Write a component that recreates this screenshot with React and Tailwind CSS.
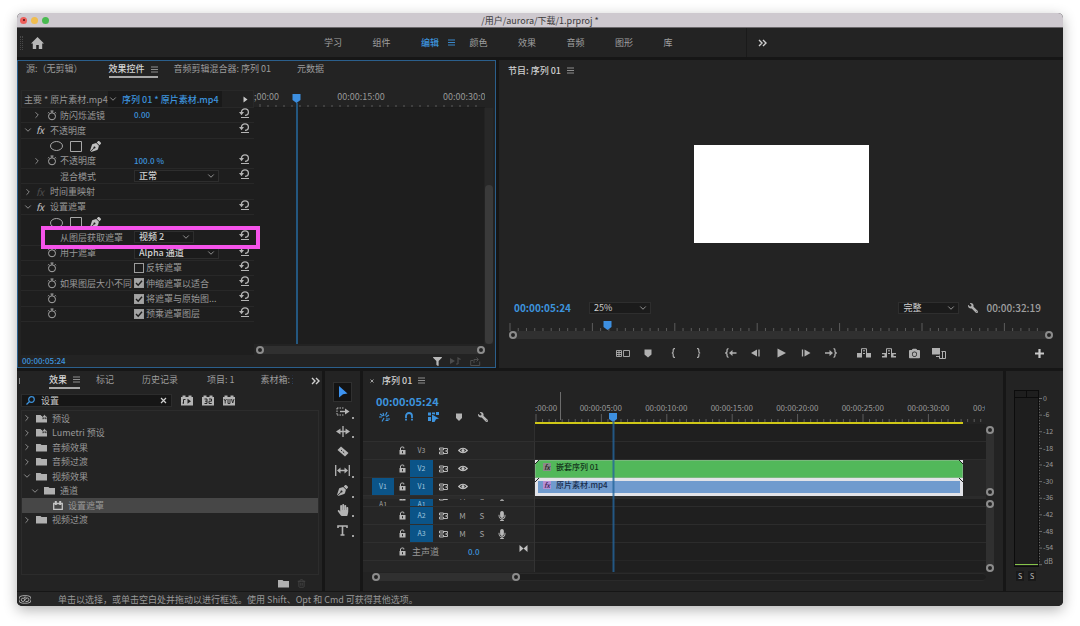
import { FaCamera, FaFilter, FaHandPaper, FaMicrophone, FaPenNib, FaWrench } from 'react-icons/fa';
import { ChevronDown, ChevronRight, Trash2 } from 'lucide-react';

const Icon = ({ w = 12, h = 12, className = '', children }) => (
  <svg
    width={w}
    height={h}
    viewBox={`0 0 ${w} ${h}`}
    fill="none"
    stroke="currentColor"
    className={`shrink-0 ${className}`}
    aria-hidden="true"
  >
    {children}
  </svg>
);

const Burger = ({ className = 'text-[#9a9a9a]' }) => (
  <Icon w={7} h={7} className={className}>
    <path d="M0 1h7M0 3.5h7M0 6h7" strokeWidth="0.9" />
  </Icon>
);

const DoubleChevron = () => (
  <Icon w={9} h={8} className="text-[#d0d0d0]">
    <path d="M1 1l3 3-3 3M5 1l3 3-3 3" strokeWidth="1.4" />
  </Icon>
);

const Reset = () => (
  <Icon w={11} h={11} className="text-[#b4b4b4]">
    <path d="M2.500 4.500V4C2.500 2 4 .9 6 .9S9.400 2.200 9.400 4.200 8 7.300 6 7.300" strokeWidth="1.3" />
    <path d="M0 4h5L2.500 7.200z" fill="currentColor" stroke="none" />
    <path d="M2 9.500h8" strokeWidth="1" />
  </Icon>
);

const Stopwatch = () => (
  <Icon w={10} h={11} className="text-[#a8a8a8]">
    <circle cx="5" cy="6.300" r="3.500" strokeWidth="1" />
    <path d="M3.500 1h3M5 1v1.800M8 2.200l1 1M2 2.200l-1 1" strokeWidth="1" />
  </Icon>
);

const Marker = ({ className }) => (
  <Icon w={8} h={9} className={className}>
    <path d="M0.500 0.500h7v5L4 8.500.5 5.500z" fill="currentColor" stroke="none" />
  </Icon>
);

const Playhead = () => (
  <Icon w={9} h={9} className="text-[#3d8fe0]">
    <path d="M0.500 0h8v6L4.500 9 .5 6z" fill="currentColor" stroke="none" />
  </Icon>
);

const Folder = ({ star, className = 'text-[#b0b0b0]' }) => (
  <Icon w={11} h={9} className={className}>
    <path d="M0 1h4.500l1 1H11v6.500H0z" fill="currentColor" stroke="none" />
    {star && (
      <path
        d="M8.500 0l.9 1.700 1.600.2-1.200 1.300.4 1.800-1.700-.9-1.700.9.4-1.800L6 1.900l1.600-.2z"
        fill="currentColor"
        stroke="#232323"
        strokeWidth="0.7"
      />
    )}
  </Icon>
);

const EffectBlock = () => (
  <Icon w={10} h={9} className="text-[#c4c4c4]">
    <path d="M0.700 2.500h8.600v5.800H.7z" strokeWidth="1.300" />
    <path d="M1.800 0h2v4h-2zM6.200 0h2v4h-2z" fill="currentColor" stroke="none" />
  </Icon>
);

const Badge = ({ children }) => (
  <Icon w={12} h={11} className="text-[#b4b4b4]">
    <path d="M0 2h1.500V.5h3V2h3V.5h3V2H12v8.500H0z" fill="currentColor" stroke="none" />
    <g className="text-[#232323]">{children}</g>
  </Icon>
);

const Lock = () => (
  <Icon w={7} h={9} className="text-[#b8b8b8]">
    <path d="M0.500 4h6v4.500h-6z" fill="currentColor" stroke="none" />
    <path d="M1.500 4V1.800Q3 .2 4.800 1.300V2.500" strokeWidth="1" />
    <path d="M3.500 5.200v2" stroke="#262626" strokeWidth="1" />
  </Icon>
);

const SyncLock = () => (
  <Icon w={9} h={8} className="text-[#b8b8b8]">
    <path d="M0.500 1h4v2h-4zM.5 5h4v2h-4zM4.500 1.500h4v1.500M4.500 6.500h4V5" strokeWidth="1" />
    <path d="M6.500 3.200h2.500v1.600H6.500z" fill="currentColor" stroke="none" />
  </Icon>
);

const Eye = () => (
  <Icon w={10} h={7} className="text-[#c4c4c4]">
    <path d="M0.700 3.500Q5-1 9.300 3.500Q5 8 .7 3.500z" strokeWidth="1.100" />
    <circle cx="5" cy="3.500" r="1.500" fill="currentColor" stroke="none" />
  </Icon>
);

const Knob = () => <span className="size-2 shrink-0 rounded-full border-2 border-[#8c8c8c] bg-[#232323]" />;

// evenly spaced marks; every `major`-th one is taller
const Ticks = ({ step, count, major, height = 8, start = 1, className = '' }) => (
  <svg width="100%" height={height} className={className} aria-hidden="true">
    {Array.from({ length: count }, (_, i) => (
      <line
        key={i}
        x1={start + i * step}
        x2={start + i * step}
        y1={i % major === 0 ? 0 : height - 3}
        y2={height}
        stroke="#5c5c5c"
        strokeWidth="1"
      />
    ))}
  </svg>
);

const Dropdown = ({ label, options, className = '' }) => (
  <div className={`relative flex h-3 items-center border border-[#2e2e2e] bg-[#1b1b1b] ${className}`}>
    <select
      aria-label={label}
      className="h-3.5 w-full appearance-none bg-transparent pl-1 text-[9px] leading-[14px] text-[#d0d0d0] outline-none"
    >
      {options.map((option) => (
        <option key={option}>{option}</option>
      ))}
    </select>
    <ChevronDown size={10} className="pointer-events-none absolute right-0.5 text-[#a8a8a8]" />
  </div>
);

const Tab = ({ active, children, className = '' }) => (
  <button
    className={`flex h-4 items-center gap-1.5 whitespace-nowrap border-b-2 ${
      active ? 'border-[#a8a8a8] font-medium text-[#d4d4d4]' : 'border-transparent text-[#9c9c9c]'
    } ${className}`}
  >
    {children}
    {active && <Burger />}
  </button>
);

const WORKSPACES = ['学习', '组件', '编辑', '颜色', '效果', '音频', '图形', '库'];

const TitleBar = () => (
  <header className="relative flex h-[15px] shrink-0 items-center justify-center border-b border-[#6b686b] bg-[#cec9cf] text-[#3c3a3c]">
    <div className="absolute left-[3px] flex gap-1">
      <button aria-label="关闭" className="flex size-[7px] items-center justify-center rounded-full bg-[#ee5f5b]">
        <span className="size-0.5 rounded-full bg-[#4c0f10]" />
      </button>
      <button aria-label="最小化" className="size-[7px] rounded-full bg-[#f0bd4e]" />
      <button aria-label="缩放" className="size-[7px] rounded-full bg-[#49bb50]" />
    </div>
    <h1 className="text-[9px] leading-none">/用户/aurora/下载/1.prproj *</h1>
  </header>
);

const WorkspaceBar = () => (
  <nav className="flex h-[29px] shrink-0 items-center bg-[#232323]">
    <div className="ml-[3px] h-3.5 w-[3px] border-x border-dotted border-[#484848]" />
    <button aria-label="主页" className="ml-2 text-[#b8b8b8]">
      <Icon w={13} h={12}>
        <path d="M6.500 0L13 6.500h-1.800V12H7.800V8H5.200v4H1.800V6.500H0z" fill="currentColor" stroke="none" />
      </Icon>
    </button>
    <div className="ml-[280px] grid w-[388px] grid-cols-8">
      {WORKSPACES.map((name) => (
        <button
          key={name}
          className={`flex items-center gap-[9px] leading-none ${
            name === '编辑' ? 'font-medium text-[#3d93dd]' : 'text-[#a0a0a0]'
          }`}
        >
          {name}
          {name === '编辑' && <Burger className="text-[#3d93dd]" />}
        </button>
      ))}
    </div>
    <div className="ml-[34px] flex h-full items-center border-l border-[#1a1a1a] pl-[11px]">
      <button aria-label="更多工作区">
        <DoubleChevron />
      </button>
    </div>
  </nav>
);

const PROPERTIES = [
  { kind: 'param', open: false, timed: true, label: '防闪烁滤镜', value: '0.00' },
  { kind: 'group', open: true, fx: true, label: '不透明度' },
  { kind: 'shapes' },
  { kind: 'param', open: false, timed: true, label: '不透明度', value: '100.0 %' },
  { kind: 'param', label: '混合模式', options: ['正常', '溶解', '变暗'] },
  { kind: 'group', open: false, dim: true, label: '时间重映射' },
  { kind: 'group', open: true, fx: true, label: '设置遮罩' },
  { kind: 'shapes' },
  { kind: 'param', label: '从图层获取遮罩', options: ['视频 2', '视频 1'], narrow: true, highlight: true },
  { kind: 'param', timed: true, label: '用于遮罩', options: ['Alpha 通道', '明亮度'] },
  { kind: 'param', timed: true, check: '反转遮罩', checked: false },
  { kind: 'param', timed: true, label: '如果图层大小不同', check: '伸缩遮罩以适合', checked: true },
  { kind: 'param', timed: true, check: '将遮罩与原始图...', checked: true },
  { kind: 'param', timed: true, check: '预乘遮罩图层', checked: true },
];

const Twirl = ({ open }) => (
  <span className="flex w-3.5 shrink-0 justify-center text-[#a0a0a0]">
    {open === true && <ChevronDown size={10} />}
    {open === false && <ChevronRight size={10} />}
  </span>
);

const ShapesRow = () => (
  <div className="flex items-center gap-[7px] pl-[29px] text-[#a8a8a8]">
    <button aria-label="创建椭圆形蒙版">
      <Icon w={13} h={10}>
        <ellipse cx="6.500" cy="5" rx="6" ry="4.500" />
      </Icon>
    </button>
    <button aria-label="创建 4 点多边形蒙版">
      <Icon w={12} h={11}>
        <path d="M0.500.5h11v10H.5z" />
      </Icon>
    </button>
    <button aria-label="自由绘制贝塞尔曲线" className="ml-px text-[#c0c0c0]">
      <FaPenNib size={11} />
    </button>
  </div>
);

const PropertyRow = ({ row }) => {
  if (row.kind === 'shapes') return <ShapesRow />;

  const reset = !row.dim && (
    <button aria-label="重置" className="absolute right-1 top-0">
      <Reset />
    </button>
  );

  if (row.kind === 'group') {
    return (
      <div className="relative flex items-center border-b border-[#282828]">
        <Twirl open={row.open} />
        <span className={`w-2.5 text-center text-[10px] italic leading-none ${row.dim ? 'text-[#4c4c4c]' : 'text-[#c0c0c0]'}`}>
          fx
        </span>
        <span className="ml-[5px] leading-none">{row.label}</span>
        {reset}
      </div>
    );
  }

  return (
    <div className="relative flex items-center border-b border-[#282828] pl-[9px]">
      <Twirl open={row.open} />
      <span className="flex w-4 shrink-0 justify-center">{row.timed && <Stopwatch />}</span>
      <span className="w-[74px] shrink-0 whitespace-nowrap leading-none">{row.label}</span>
      {row.value && <span className="text-[8px] font-medium leading-none text-[#3d93dd]">{row.value}</span>}
      {row.options && (
        <Dropdown label={row.label} options={row.options} className={row.narrow ? 'w-[60px] font-medium' : 'w-[85px] font-medium'} />
      )}
      {row.check && (
        <label className="relative flex items-center gap-0.5 leading-none">
          <input
            type="checkbox"
            defaultChecked={row.checked}
            className="peer size-2.5 appearance-none border border-[#9c9c9c] checked:bg-[#a4a4a4]"
          />
          <Icon w={10} h={10} className="absolute left-0 hidden text-[#1e1e1e] peer-checked:block">
            <path d="M2 5l2.200 2.300L8 2.800" strokeWidth="1.400" />
          </Icon>
          {row.check}
        </label>
      )}
      {reset}
      {row.highlight && (
        <div className="pointer-events-none absolute -bottom-1 -right-[6px] -top-1 left-5 z-10 border-4 border-[#f553ea]" />
      )}
    </div>
  );
};

const EffectControls = () => (
  <section className="flex w-[479px] shrink-0 flex-col border border-[#2b5f8c] bg-[#232323]">
    <div className="flex h-[29px] items-start pl-2 pt-px">
      <Tab>源:（无剪辑）</Tab>
      <Tab active className="ml-[26px]">效果控件</Tab>
      <Tab className="ml-4">音频剪辑混合器: 序列 01</Tab>
      <Tab className="ml-[26px]">元数据</Tab>
    </div>

    <div className="ml-[3px] flex min-h-0 flex-1">
      <div className="flex w-[233px] shrink-0 flex-col bg-[#1e1e1e] text-[#989898]">
        <div className="flex h-[18px] shrink-0 items-center border border-[#282828] bg-[#212121] leading-none">
          <span className="w-[86px] shrink-0 whitespace-nowrap pl-0.5">主要 * 原片素材.mp4</span>
          <button className="flex h-full w-[114px] items-center gap-1 whitespace-nowrap bg-[#191919] font-medium text-[#3d93dd]">
            <ChevronDown size={10} className="shrink-0 text-[#a0a0a0]" />
            序列 01 * 原片素材.mp4
          </button>
          <Icon w={5} h={7} className="ml-auto mr-[5px] text-[#c8c8c8]">
            <path d="M0.500 0.500L4.500 3.500.5 6.500z" fill="currentColor" stroke="none" />
          </Icon>
        </div>
        <div className="grid h-[214px] shrink-0 grid-rows-[repeat(14,minmax(0,1fr))]">
          {PROPERTIES.map((row, index) => (
            <PropertyRow key={index} row={row} />
          ))}
        </div>
      </div>

      <div className="relative flex min-w-0 flex-1 flex-col">
        <div className="mr-2.5 h-[18px] shrink-0 overflow-hidden border-b border-[#1c1c1c] text-[9px] text-[#989898]">
          <div className="flex justify-between leading-[14px]">
            <span>;00:00</span>
            <span>00:00:15:00</span>
            <span className="w-[42px] overflow-hidden whitespace-nowrap">00:00:30:00</span>
          </div>
          <Ticks step={8} count={28} major={99} height={4} start={6} />
        </div>
        <div className="flex min-h-0 flex-1">
          <div className="mr-px flex-1 bg-[#1e1e1e]" />
          <div className="w-2 bg-[#282828] pt-[77px]">
            <div className="h-full rounded-full bg-[#3a3a3a]" />
          </div>
          <div className="w-0.5" />
        </div>
        <div className="mr-2.5 flex h-[11px] shrink-0 items-center pl-0.5">
          <div className="flex h-2 flex-1 items-center justify-between rounded-full bg-[#303030]">
            <Knob />
            <Knob />
          </div>
        </div>
        <div className="absolute bottom-[11px] left-[38px] top-1 flex flex-col items-center">
          <Playhead />
          <div className="w-0.5 flex-1 bg-[#24577f]" />
        </div>
      </div>
    </div>

    <div className="flex h-3 shrink-0 items-center gap-2 pl-1 pr-3.5 text-[#4c4c4c]">
      <span className="mr-auto text-[8px] font-medium leading-none text-[#3d93dd]">00:00:05:24</span>
      <button aria-label="过滤属性" className="text-[#b8b8b8]">
        <FaFilter size={9} />
      </button>
      <button aria-label="仅播放音频">
        <Icon w={12} h={8}>
          <path d="M0 1l5 3-5 3z" fill="currentColor" stroke="none" />
          <path d="M8 7V1l2.500 1.500M6 7h2" strokeWidth="1.200" />
        </Icon>
      </button>
      <button aria-label="导出">
        <Icon w={11} h={9}>
          <path d="M3 3.500H.7v5h9v-4M4 6V2.500h4M6.500.5l2 2-2 2" />
        </Icon>
      </button>
    </div>
  </section>
);

const Brace = ({ close }) => (
  <Icon w={5} h={10}>
    <path
      d={close ? 'M1 .7h.8Q2.800.7 2.800 2v1.500Q2.800 5 4.200 5Q2.800 5 2.800 6.500V8q0 1.300-1 1.300H1' : 'M4 .7h-.8Q2.200.7 2.200 2v1.500Q2.200 5 .8 5Q2.200 5 2.200 6.500V8q0 1.300 1 1.300H4'}
      strokeWidth="1.200"
    />
  </Icon>
);

const Lift = ({ notch }) => (
  <Icon w={14} h={10}>
    <path d="M0 5h5v4.500H0zM9 5h5v4.500H9z" fill="currentColor" stroke="none" />
    <path d="M4.500 5V.7h5V5M6 2.800h2M6 5.500h2" />
    {notch && <path d="M0 7.200h2.500M11.500 7.200H14" stroke="#232323" strokeWidth="1.800" />}
  </Icon>
);

const TRANSPORT = [
  {
    name: '拖动视频',
    icon: (
      <Icon w={14} h={7}>
        <path d="M0.500.5h5v6h-5zM.5 2.500h5M.5 4.500h5M3 .5v6M7.500.5h6v6h-6z" strokeWidth="0.900" />
      </Icon>
    ),
  },
  { name: '添加标记', icon: <Marker /> },
  { name: '标记入点', icon: <Brace /> },
  { name: '标记出点', icon: <Brace close /> },
  {
    name: '转到入点',
    gap: true,
    icon: (
      <Icon w={12} h={10}>
        <path d="M3.500.7Q2 .7 2 2.500V4L.8 5 2 6v1.500Q2 9.300 3.500 9.300M6 5h5.500" strokeWidth="1.300" />
        <path d="M4 5l3.500-3v6z" fill="currentColor" stroke="none" />
      </Icon>
    ),
  },
  {
    name: '后退一帧',
    icon: (
      <Icon w={10} h={8}>
        <path d="M0 4l6-3.500v7z" fill="currentColor" stroke="none" />
        <path d="M8 .5v7" strokeWidth="1.300" />
      </Icon>
    ),
  },
  {
    name: '播放',
    icon: (
      <Icon w={9} h={10}>
        <path d="M0.500.5L9 5 .5 9.500z" fill="currentColor" stroke="none" />
      </Icon>
    ),
  },
  {
    name: '前进一帧',
    icon: (
      <Icon w={10} h={8}>
        <path d="M9.500 4l-6-3.500v7z" fill="currentColor" stroke="none" />
        <path d="M1.500 .5v7" strokeWidth="1.300" />
      </Icon>
    ),
  },
  {
    name: '转到出点',
    icon: (
      <Icon w={12} h={10}>
        <path d="M8.500.7Q10 .7 10 2.500V4l1.200 1L10 6v1.500Q10 9.300 8.500 9.300M0 5h5.500" strokeWidth="1.300" />
        <path d="M8 5L4.500 2v6z" fill="currentColor" stroke="none" />
      </Icon>
    ),
  },
  { name: '提升', gap: true, icon: <Lift /> },
  { name: '提取', icon: <Lift notch /> },
  { name: '导出帧', icon: <FaCamera size={11} /> },
  {
    name: '比较视图',
    icon: (
      <Icon w={14} h={11}>
        <path d="M0 0h8v6.500H0z" fill="currentColor" stroke="none" />
        <path d="M9.500 3.500h4v7h-6v-3M10.500 3.500v7" strokeWidth="1" />
        <path d="M4 8.500h3" strokeWidth="1" />
      </Icon>
    ),
  },
];

const ProgramMonitor = () => (
  <section className="flex min-w-0 flex-1 flex-col bg-[#232323]">
    <div className="flex h-5 shrink-0 items-center gap-1.5 pl-[9px] font-medium leading-none text-[#d0d0d0]">
      节目: 序列 01 <Burger />
    </div>
    <div className="flex min-h-0 flex-1 items-center justify-center">
      <div className="mt-2 h-[98px] w-[175px] bg-white" />
    </div>
    <div className="flex h-4 shrink-0 items-center pl-[15px] pr-[22px]">
      <span className="w-[75px] text-[10px] font-bold leading-none text-[#3d93dd]">00:00:05:24</span>
      <Dropdown label="缩放级别" options={['25%', '50%', '100%']} className="w-[62px]" />
      <Dropdown label="回放分辨率" options={['完整', '1/2', '1/4']} className="ml-auto w-[61px]" />
      <button aria-label="设置" className="ml-[9px] text-[#b0b0b0]">
        <FaWrench size={10} className="-scale-x-100" />
      </button>
      <span className="ml-2 text-[10px] font-medium leading-none text-[#a0a0a0]">00:00:32:19</span>
    </div>
    <div className="relative mx-2.5 mt-[7px] shrink-0">
      <Ticks step={8.24} count={65} major={10} className="block" />
      <div className="flex h-2 items-center justify-between rounded-full bg-[#303030]">
        <Knob />
        <Knob />
      </div>
      <div className="absolute -top-0.5 left-[17.3%]">
        <Playhead />
      </div>
    </div>
    <div className="mb-1.5 mt-[5px] grid h-[18px] shrink-0 grid-cols-[1fr_auto_1fr] items-center text-[#b0b0b0]">
      <div className="col-start-2 flex gap-[5px]">
        {TRANSPORT.map(({ name, icon, gap }) => (
          <button key={name} aria-label={name} className={`flex h-4 w-5 items-center justify-center ${gap ? 'ml-2' : ''}`}>
            {icon}
          </button>
        ))}
      </div>
      <button aria-label="按钮编辑器" className="mr-[19px] justify-self-end text-[#c8c8c8]">
        <Icon w={9} h={9}>
          <path d="M4.500 0v9M0 4.500h9" strokeWidth="2.200" />
        </Icon>
      </button>
    </div>
  </section>
);

const EFFECTS = [
  { name: '预设', depth: 'pl-0', open: false, star: true },
  { name: 'Lumetri 预设', depth: 'pl-0', open: false, star: true },
  { name: '音频效果', depth: 'pl-0', open: false },
  { name: '音频过渡', depth: 'pl-0', open: false },
  { name: '视频效果', depth: 'pl-0', open: true },
  { name: '通道', depth: 'pl-2', open: true },
  { name: '设置遮罩', depth: 'pl-[17px]', selected: true },
  { name: '视频过渡', depth: 'pl-0', open: false },
];

const EffectsPanel = () => (
  <section className="flex w-[305px] shrink-0 flex-col bg-[#232323]">
    <div className="flex h-[19px] shrink-0 items-center overflow-hidden pl-0.5 pr-0.5">
      <span className="h-1.5 w-px bg-[#8a8a8a]" />
      <Tab active className="ml-[29px]">效果</Tab>
      <Tab className="ml-4">标记</Tab>
      <Tab className="ml-7">历史记录</Tab>
      <Tab className="ml-[29px]">项目: 1</Tab>
      <Tab className="ml-[26px] w-8 overflow-hidden">素材箱: 素材</Tab>
      <button aria-label="更多面板" className="ml-auto">
        <DoubleChevron />
      </button>
    </div>
    <div className="mt-1 flex h-[13px] shrink-0 items-center pl-1">
      <label className="flex h-full w-[151px] items-center border border-[#2c2c2c] bg-[#161616] px-1">
        <Icon w={9} h={9} className="text-[#3d93dd]">
          <circle cx="5.500" cy="3.500" r="2.800" strokeWidth="1.200" />
          <path d="M3.500 5.500L.5 8.500" strokeWidth="1.300" />
        </Icon>
        <input
          aria-label="搜索效果"
          defaultValue="设置"
          className="ml-1.5 h-3.5 min-w-0 flex-1 bg-transparent text-[9px] leading-[14px] text-[#c8c8c8] outline-none"
        />
        <button aria-label="清除">
          <Icon w={7} h={7} className="text-[#d0d0d0]">
            <path d="M1 1l5 5M6 1L1 6" strokeWidth="1.200" />
          </Icon>
        </button>
      </label>
      <div className="ml-[9px] flex gap-[9px]">
        <button aria-label="加速效果">
          <Badge>
            <path d="M2.500 4.500v4M2.500 4.500h2M1.500 8h1.500" />
            <path d="M6.500 3.800l3.500 2.500-3.500 2.500z" fill="currentColor" stroke="none" />
          </Badge>
        </button>
        <button aria-label="32 位颜色">
          <Badge>
            <path d="M2.500 4h2.500v4.500H2.500M3 6.200h2M7 4h2.500v2.200H7v2.300h2.700" />
          </Badge>
        </button>
        <button aria-label="YUV 效果">
          <Badge>
            <path d="M1 4l1.200 2L3.500 4M2.200 6v2.500M5 4v4.500h2V4M8.500 4l1.200 4L11 4" strokeWidth="0.900" />
          </Badge>
        </button>
      </div>
    </div>
    <ul className="ml-1 mr-[3px] mt-[3px] min-h-0 flex-1 border border-[#2c2c2c] text-[#989898]">
      <li className="grid h-[116px] grid-rows-8">
        {EFFECTS.map((item) => (
          <button
            key={item.name}
            className={`flex items-center leading-none ${item.depth} ${item.selected ? 'bg-[#474747]' : ''}`}
          >
            <span className="flex w-3.5 shrink-0 pr-1 text-[#a0a0a0]">
              {item.open === true && <ChevronDown size={10} />}
              {item.open === false && <ChevronRight size={10} />}
            </span>
            {item.selected ? <EffectBlock /> : <Folder star={item.star} />}
            <span className="ml-[5px]">{item.name}</span>
          </button>
        ))}
      </li>
    </ul>
    <div className="flex h-4 shrink-0 items-center justify-end gap-2 pr-4">
      <button aria-label="新建自定义素材箱">
        <Folder />
      </button>
      <button aria-label="删除" className="text-[#4a4a4a]">
        <Trash2 size={9} />
      </button>
    </div>
  </section>
);

const TOOLS = [
  {
    name: '选择工具',
    icon: (
      <Icon w={10} h={12} className="text-[#3d93f0]">
        <path d="M1 0l8.500 7.500-4.500.7L1 11.500z" fill="currentColor" stroke="none" />
      </Icon>
    ),
  },
  {
    name: '向前选择轨道工具',
    more: true,
    icon: (
      <Icon w={14} h={9}>
        <path d="M1 1h7M1 8h7M1 1v7" strokeDasharray="1.500 1" />
        <path d="M4 4.500h6" strokeWidth="1.400" />
        <path d="M9 1.500l4.500 3-4.500 3z" fill="currentColor" stroke="none" />
      </Icon>
    ),
  },
  {
    name: '波纹编辑工具',
    more: true,
    icon: (
      <Icon w={14} h={11}>
        <path d="M7 0v11M2 5.500h10" strokeWidth="1.300" />
        <path d="M0 5.500l4.500-3v6zM14 5.500l-4.500-3v6z" fill="currentColor" stroke="none" />
      </Icon>
    ),
  },
  {
    name: '剃刀工具',
    icon: (
      <Icon w={12} h={11}>
        <path d="M4 .5L11.500 7 8 10.500.5 4z" fill="currentColor" stroke="none" />
        <path d="M4 4l4 3.500" stroke="#232323" strokeDasharray="1.500 1" />
      </Icon>
    ),
  },
  {
    name: '外滑工具',
    more: true,
    icon: (
      <Icon w={15} h={11}>
        <path d="M0.700 0v11M14.300 0v11M4 5.500h7" strokeWidth="1.300" />
        <path d="M2 5.500l3.500-3v6zM13 5.500l-3.500-3v6z" fill="currentColor" stroke="none" />
      </Icon>
    ),
  },
  { name: '钢笔工具', more: true, icon: <FaPenNib size={11} /> },
  { name: '手形工具', more: true, icon: <FaHandPaper size={12} /> },
  {
    name: '文字工具',
    more: true,
    icon: (
      <Icon w={11} h={11}>
        <path d="M1 3V1h9v2M5.500 1v9M3.500 10h4" strokeWidth="1.600" />
      </Icon>
    ),
  },
];

const ToolStrip = () => (
  <section className="w-[35px] shrink-0 bg-[#232323] pt-[11px]">
    <div className="grid h-[158px] grid-rows-8 justify-center">
      {TOOLS.map(({ name, icon, more }) => (
        <button
          key={name}
          aria-label={name}
          className={`relative flex w-[19px] items-center justify-center ${
            more || name === '剃刀工具' ? 'text-[#b4b4b4]' : 'border border-[#303030] bg-[#131313]'
          }`}
        >
          {icon}
          {more && <span className="absolute -right-0.5 bottom-[3px] size-0.5 bg-[#a0a0a0]" />}
        </button>
      ))}
    </div>
  </section>
);

const TrackHeader = ({ name, source, targeted, audio }) => (
  <div className="flex h-[18px] shrink-0 items-center border-b border-[#2f2f2f] pl-[9px] text-[7px] leading-none text-[#a0a0a0]">
    <div className="flex h-full w-[22px] shrink-0">
      {source && <button className="h-full w-full bg-[#0b5488] text-[#9fc4de]">{source}</button>}
    </div>
    <button aria-label="切换轨道锁定" className="flex w-4 shrink-0 justify-center">
      <Lock />
    </button>
    <button className={`h-full w-[23px] shrink-0 ${targeted ? 'bg-[#0b5488] text-[#9fc4de]' : ''}`}>{name}</button>
    <button aria-label="切换同步锁定" className="flex w-5 shrink-0 justify-center">
      <SyncLock />
    </button>
    {audio ? (
      <>
        <button className="w-[19px] text-[8px]">M</button>
        <button className="w-5 text-[8px]">S</button>
        <button aria-label="画外音录制" className="flex w-5 justify-center text-[#b8b8b8]">
          <FaMicrophone size={10} />
        </button>
      </>
    ) : (
      <button aria-label="切换轨道输出" className="flex w-[19px] justify-center">
        <Eye />
      </button>
    )}
  </div>
);

const FxBadge = ({ className }) => (
  <span className={`flex size-2 items-center justify-center text-[7px] italic leading-none ${className}`}>fx</span>
);

const Corner = ({ right, className }) => (
  <svg width="4" height="4" className={`absolute ${right ? '-scale-x-100' : ''} ${className}`} aria-hidden="true">
    <path d="M0 0h4L0 4z" fill="#e4e4e8" />
    <path d="M4 0L0 4" stroke="#202020" strokeWidth="1" />
  </svg>
);

const TIMES = ['00:00:05:00', '00:00:10:00', '00:00:15:00', '00:00:20:00', '00:00:25:00', '00:00:30:00'];

const Timeline = () => (
  <section className="flex min-w-0 flex-1 flex-col bg-[#232323]">
    <div className="grid min-h-0 grid-cols-[172px_minmax(0,1fr)_17px]">
      <div className="flex flex-col">
        <div className="flex h-[19px] items-center pl-1.5 font-medium leading-none text-[#d0d0d0]">
          <button aria-label="关闭序列" className="w-[13px] text-left">
            <Icon w={6} h={6} className="text-[#a0a0a0]">
              <path d="M1.500 1.500l3 3M4.500 1.500l-3 3" />
            </Icon>
          </button>
          <span className="mr-1.5">序列 01</span>
          <Burger />
        </div>
        <div className="flex h-[22px] items-center pl-[13px] text-[11px] font-bold leading-none text-[#3d93dd]">00:00:05:24</div>
        <div className="mb-[3px] flex h-[9px] items-center pl-[9px] text-[#b4b4b4]">
          <button aria-label="将序列作为嵌套插入" className="flex w-[25px] justify-center text-[#3d93dd]">
            <Icon w={11} h={10}>
              <path d="M0 5h3M4 1l1 3M1 2l3 2M8 0L6.500 3.500M7 5l3-2M7 7h4M5 6L3 9.500M6.500 8.500h3" strokeWidth="1.200" />
            </Icon>
          </button>
          <button aria-label="对齐" className="flex w-6 justify-center text-[#3d93dd]">
            <Icon w={8} h={9}>
              <path d="M1 8.500V4a3 3 0 0 1 6 0v4.500" strokeWidth="1.800" />
              <path d="M0 6.500h8" stroke="#232323" strokeWidth="0.700" />
            </Icon>
          </button>
          <button aria-label="链接选择项" className="flex w-[25px] justify-center text-[#3d93dd]">
            <Icon w={11} h={10}>
              <path d="M0 .5h3v3H0zM4 .5h3v2L4 2zM8 0h3v3H8zM0 5h3v4H0zM4 2.500l7 4-3 .7-1.500 2.800H4z" fill="currentColor" stroke="none" />
            </Icon>
          </button>
          <button aria-label="添加标记" className="flex w-[25px] justify-center">
            <Icon w={6} h={8}>
              <path d="M0 .5h6v4.500L3 8 0 5z" fill="currentColor" stroke="none" />
            </Icon>
          </button>
          <button aria-label="时间轴显示设置" className="flex w-6 justify-center">
            <FaWrench size={10} className="-scale-x-100" />
          </button>
        </div>
        <div className="h-[18px] border-b border-r border-[#2f2f2f]" />
        <div className="border-r border-[#333] bg-[#262626]">
          <TrackHeader name="V3" />
          <TrackHeader name="V2" targeted />
          <TrackHeader name="V1" source="V1" targeted />
          <div className="h-[3px] bg-[#2b2b2b]" />
          <div className="flex h-2 items-start overflow-hidden border-b border-[#2f2f2f] pl-[9px] text-[7px] leading-[10px] text-[#a0a0a0]">
            <span className="w-[22px] text-center">A1</span>
            <span className="-mt-[7px] flex w-4 justify-center">
              <Lock />
            </span>
            <span className="w-[23px] bg-[#0b5488] text-center text-[#9fc4de]">A1</span>
            <span className="-mt-[6px] flex w-5 justify-center">
              <SyncLock />
            </span>
            <span className="-mt-[7px] w-[19px] text-center">M</span>
            <span className="-mt-[7px] w-5 text-center">S</span>
            <span className="-mt-[8px] flex w-5 justify-center">
              <FaMicrophone size={10} />
            </span>
          </div>
          <TrackHeader name="A2" targeted audio />
          <TrackHeader name="A3" targeted audio />
          <div className="flex h-[18px] items-center border-b border-[#2f2f2f] pl-[31px] pr-1.5 leading-none text-[#989898]">
            <span className="flex w-4 justify-center">
              <Lock />
            </span>
            <span className="ml-0.5 w-14">主声道</span>
            <span className="text-[8px] font-medium text-[#3d93dd]">0.0</span>
            <Icon w={9} h={7} className="mb-1.5 ml-auto text-[#c0c0c0]">
              <path d="M0.500 0l4 3.500-4 3.500zM8.500 0l-4 3.500 4 3.500z" fill="currentColor" stroke="none" />
            </Icon>
          </div>
          <div className="h-[11px]" />
        </div>
      </div>

      <div className="relative flex min-w-0 flex-col">
        <div className="h-[53px] shrink-0 overflow-hidden pt-[31px] text-[8px] leading-[12px] text-[#989898]">
          <div className="flex whitespace-nowrap">
            <span className="w-[33px] shrink-0">:00:00</span>
            <div className="grid w-[393px] shrink-0 grid-cols-6 text-center">
              {TIMES.map((time) => (
                <span key={time}>{time}</span>
              ))}
            </div>
            <span className="ml-3 w-3 shrink-0 overflow-hidden">00:00:35:00</span>
          </div>
          <Ticks step={6.54} count={69} major={10} className="block" />
        </div>
        <div className="absolute left-[25px] top-[21px] h-7 w-px bg-[#6c6c6c]" />
        <div className="h-[18px] shrink-0 border-b border-[#2c2c2c] bg-[#1f1f1f]" />
        <div className="h-[18px] shrink-0 border-b border-[#2c2c2c] bg-[#1f1f1f]" />
        <div className="h-[18px] shrink-0 bg-[#262626]">
          <div className="relative flex h-full w-[95%] items-start gap-[5px] border border-[#78b97c] bg-[#52b85a] pl-[7px] pt-0.5 text-[8px] font-medium leading-[8px] text-[#12331a]">
            <Corner className="-left-px -top-px" />
            <Corner right className="-right-px -top-px" />
            <FxBadge className="bg-[#8a8a8a] text-[#1d1d1d]" />
            嵌套序列 01
          </div>
        </div>
        <div className="h-[18px] shrink-0 bg-[#262626]">
          <div className="relative flex h-full w-[95%] items-start gap-[5px] border-[3px] border-[#e2e3e8] bg-[#709bce] pl-[5px] text-[8px] font-medium leading-[8px] text-[#182c4c]">
            <Corner className="-left-[3px] -top-[3px]" />
            <Corner right className="-right-[3px] -top-[3px]" />
            <FxBadge className="bg-[#b48fd4] text-[#3d2358]" />
            原片素材.mp4
          </div>
        </div>
        <div className="h-[3px] shrink-0 bg-[#2b2b2b]" />
        <div className="h-2 shrink-0 border-b border-[#2c2c2c] bg-[#1f1f1f]" />
        <div className="h-[18px] shrink-0 border-b border-[#2c2c2c] bg-[#1f1f1f]" />
        <div className="h-[18px] shrink-0 border-b border-[#2c2c2c] bg-[#1f1f1f]" />
        <div className="h-[18px] shrink-0 border-b border-[#262626] bg-[#1f1f1f]" />
        <div className="h-[11px] shrink-0 bg-[#1f1f1f]" />
        <div className="absolute left-0 top-[51px] h-0.5 w-[95%] bg-[#cfc717]" />
        <div className="absolute bottom-0 left-[17.4%] top-[42px] flex -translate-x-1/2 flex-col items-center">
          <Playhead />
          <div className="w-0.5 flex-1 bg-[#24659c]/80" />
        </div>
      </div>

      <div className="flex flex-col pt-[55px]">
        <div className="flex h-[70px] w-2 flex-col justify-between rounded-full bg-[#303030]">
          <Knob />
          <Knob />
        </div>
        <div className="mt-1 flex h-[72px] w-2 flex-col justify-between rounded-full bg-[#303030]">
          <Knob />
          <Knob />
        </div>
      </div>
    </div>

    <div className="flex h-2.5 items-center pl-[9px] pr-[17px]">
      <div className="flex h-2 w-[148px] items-center justify-between rounded-full bg-[#303030]">
        <Knob />
        <Knob />
      </div>
      <div className="h-2 flex-1 rounded-r-full border-y border-[#2a2a2a] bg-[#1e1e1e]" />
    </div>
  </section>
);

const LEVELS = ['0', '-6', '-12', '-18', '-24', '-30', '-36', '-42', '-48', '-54'];

const AudioMeters = () => (
  <section className="w-[57px] shrink-0 bg-[#232323] pl-2 pt-[19px] text-[7px] leading-none text-[#989898]">
    <div className="flex">
      <div className="flex h-[177px] w-[25px] flex-col border border-[#0c0c0c] bg-[#1e1e1e]">
        <div className="flex h-[7px] shrink-0 border-b border-[#0c0c0c]">
          <div className="w-1/2 border-r border-[#0c0c0c]" />
        </div>
        <div className="mt-auto h-px bg-[#86c34a]" />
        <div className="h-px" />
      </div>
      <svg width="4" height="177" className="text-[#6c6c6c]" aria-hidden="true">
        {Array.from({ length: 61 }, (_, i) => (
          <line key={i} x1="0" x2={i % 6 === 0 ? 3 : 1} y1={8.5 + i * 2.77} y2={8.5 + i * 2.77} stroke="currentColor" strokeWidth="1" />
        ))}
      </svg>
      <div className="flex h-[177px] flex-col">
        <div className="grid h-[166px] grid-rows-10 items-center">
          {LEVELS.map((level) => (
            <span key={level}>{level}</span>
          ))}
        </div>
        <span className="ml-px mt-0.5">dB</span>
      </div>
    </div>
    <div className="mt-1 flex gap-1 pl-0.5 text-[#c0c0c0]">
      <button aria-label="独奏左声道" className="h-2.5 w-2 bg-[#191919]">S</button>
      <button aria-label="独奏右声道" className="h-2.5 w-2 bg-[#191919]">S</button>
    </div>
  </section>
);

const StatusBar = () => (
  <footer className="flex h-3.5 shrink-0 items-center bg-[#262626] pl-0.5 leading-none text-[#989898]">
    <Icon w={12} h={9} className="text-[#a8a8a8]">
      <path d="M3.500.7h5a3.500 3.500 0 0 1 0 7.500h-5a3.500 3.500 0 0 1 0-7.500z" />
      <circle cx="4" cy="4.800" r="1.700" />
      <path d="M5.500 5.800Q6.500 2.800 8.300 2.900A1.700 1.700 0 0 1 8 6.500H6.500M5 2.500Q6.500 1.500 7.500 3" />
    </Icon>
    <span className="ml-[27px]">单击以选择，或单击空白处并拖动以进行框选。使用 Shift、Opt 和 Cmd 可获得其他选项。</span>
  </footer>
);

export default function App() {
  return (
    <div className="h-screen bg-white px-[17px] pb-5 pt-[13px] font-['Noto_Sans_CJK_SC',sans-serif] text-[9px]">
      <main className="flex h-full flex-col overflow-hidden rounded-[5px] bg-[#161616] shadow-[0_4px_14px_rgba(0,0,0,0.3)]">
        <TitleBar />
        <WorkspaceBar />
        <div className="mt-[3px] flex min-h-0 flex-1 gap-[3px]">
          <EffectControls />
          <ProgramMonitor />
        </div>
        <div className="mb-px mt-[3px] flex h-[220px] shrink-0 gap-[3px]">
          <EffectsPanel />
          <ToolStrip />
          <Timeline />
          <AudioMeters />
        </div>
        <StatusBar />
      </main>
    </div>
  );
}
